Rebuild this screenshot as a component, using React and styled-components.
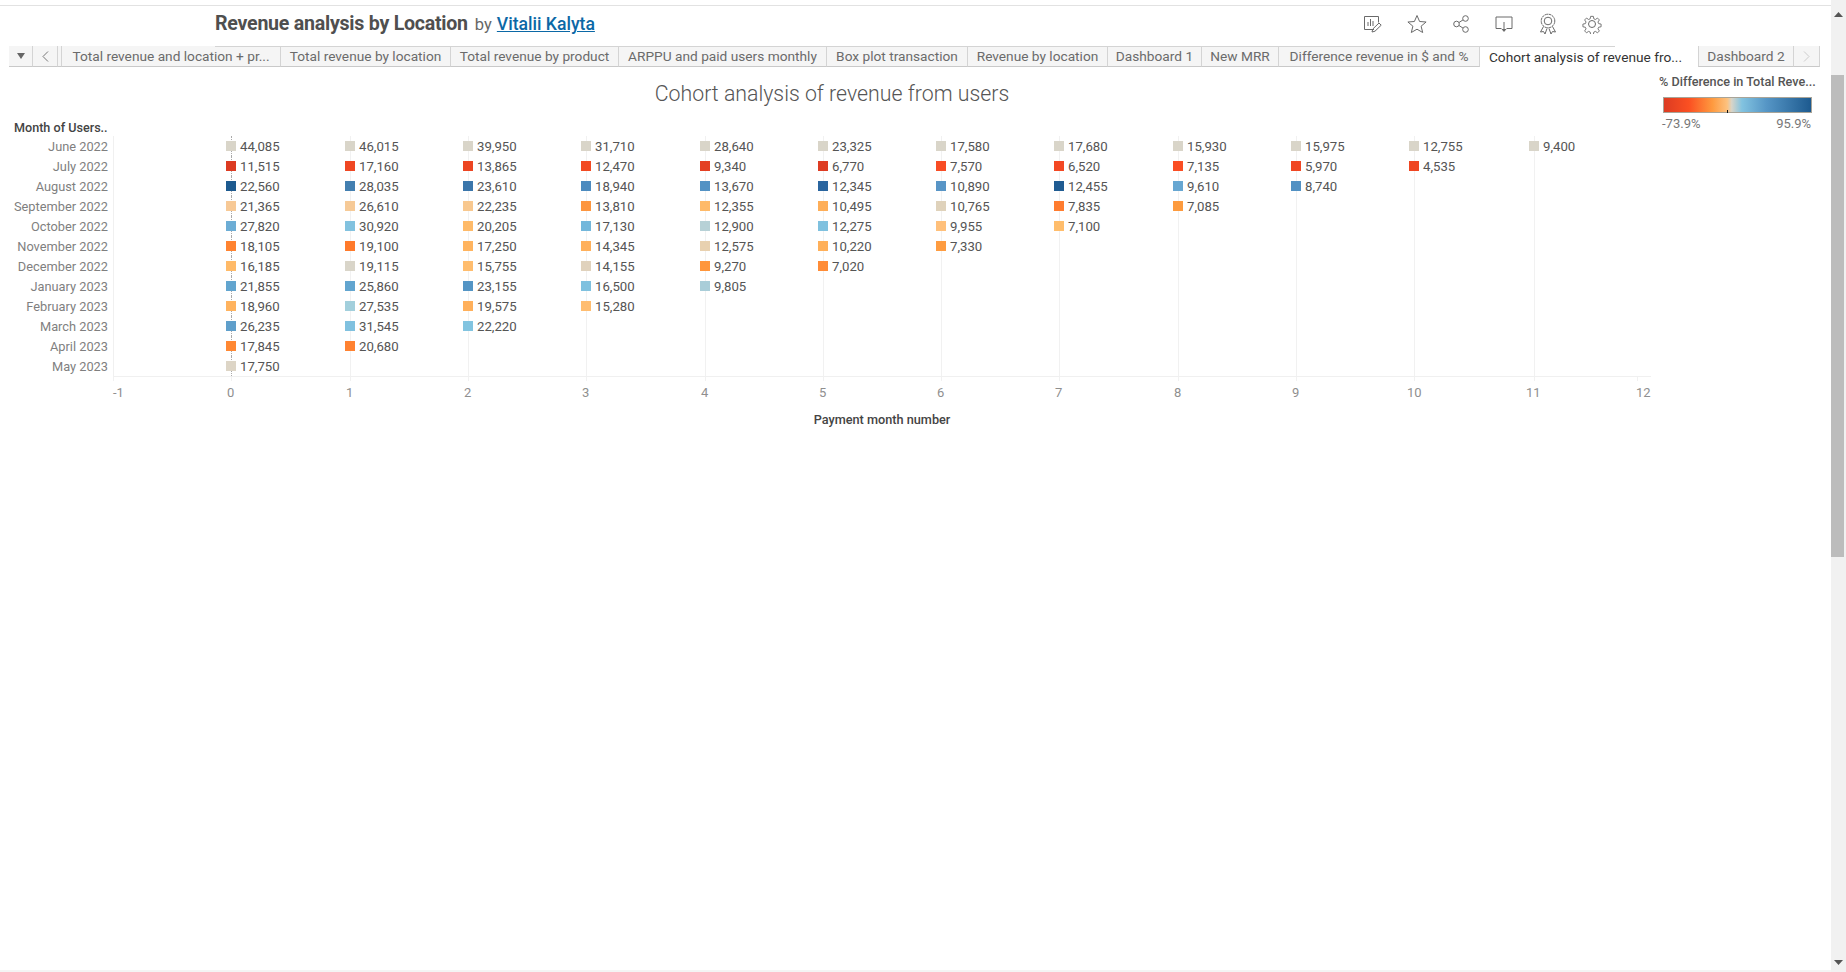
import React from "react";
import styled, { createGlobalStyle } from "styled-components";

const Global = createGlobalStyle`
  html, body { margin: 0; padding: 0; background: #fff; overflow: hidden; }
  body { font-family: Roboto, "Liberation Sans", sans-serif; }
`;

const Page = styled.div`
  display: flex;
  width: 1846px;
  height: 972px;
  overflow: hidden;
  background: #fff;
`;
const Main = styled.main`
  width: 1831px;
  height: 972px;
  display: flex;
  flex-direction: column;
  padding-top: 5px;
  box-sizing: border-box;
  border-bottom: 2px solid #f4f4f4;
`;
const TitleBar = styled.header`
  height: 41px;
  box-sizing: border-box;
  border-top: 1px solid #e2e2e2;
  display: flex;
  align-items: center;
  padding-left: 215px;
  flex: none;
`;
const TitleGroup = styled.div`
  width: 1147px;
  flex: none;
  display: flex;
  align-items: baseline;
  margin-top: -5px;
`;
const WorkbookTitle = styled.h1`
  margin: 0;
  font-size: 19.6px;
  font-weight: 700;
  color: #4f4f4f;
  letter-spacing: -0.25px;
  white-space: nowrap;
`;
const Byline = styled.span`
  margin-left: 7px;
  font-size: 16.5px;
  color: #666;
`;
const Author = styled.a`
  margin-left: 5px;
  font-size: 17.6px;
  font-weight: 500;
  color: #0b68a6;
  text-decoration: underline;
`;
const Toolbar = styled.div`
  display: flex;
  align-items: center;
  gap: 24px;
  margin-top: -4px;
  color: #6a6a6a;
  svg { display: block; flex: none; }
`;

const TabStrip = styled.nav`
  position: relative;
  height: 21px;
  margin-left: 9px;
  display: flex;
  flex: none;
  &::before {
    content: "";
    position: absolute;
    left: 206px;
    width: 1400px;
    top: 0;
    height: 1px;
    background: #d4d4d4;
  }
`;
const Tab = styled.div`
  width: ${(p) => p.$w}px;
  box-sizing: border-box;
  height: 21px;
  display: flex;
  align-items: center;
  justify-content: center;
  padding-right: ${(p) => (p.$active ? "7px" : "0")};
  white-space: nowrap;
  font-size: 13.7px;
  line-height: 20px;
  color: ${(p) => (p.$active ? "#333" : "#6b6b6b")};
  background: ${(p) => (p.$active ? "#fff" : "#f5f5f5")};
  border-right: ${(p) => (p.$active ? "0" : "1px solid #d4d4d4")};
  border-bottom: ${(p) => (p.$active ? "0" : "1px solid #c9c9c9")};
  border-left: ${(p) => (p.$edge ? "1px solid #d4d4d4" : "0")};
`;
const TabIcon = styled(Tab)`
  color: #777;
`;

const ChartHead = styled.section`
  height: 69px;
  flex: none;
  display: flex;
`;
const HeadLeft = styled.div`
  width: 1650px;
  display: flex;
  flex-direction: column;
  flex: none;
`;
const ChartTitle = styled.h2`
  margin: 14px 0 0 14px;
  height: 26px;
  line-height: 26px;
  font-size: 21.3px;
  font-weight: 300;
  color: #555;
  text-align: center;
  white-space: nowrap;
`;
const RowHeader = styled.div`
  margin: 13px 0 0 14px;
  font-size: 12.6px;
  line-height: 16px;
  font-weight: 500;
  color: #444;
`;
const Legend = styled.aside`
  margin-left: 9px;
  width: 165px;
  padding-top: 7px;
`;
const LegendTitle = styled.div`
  font-size: 12.65px;
  line-height: 16px;
  font-weight: 500;
  color: #555;
  white-space: nowrap;
`;
const LegendBar = styled.div`
  position: relative;
  margin: 7px 0 0 4px;
  width: 149px;
  height: 16px;
  box-sizing: border-box;
  border: 1px solid #a8a498;
  background: linear-gradient(
    90deg,
    #dc3b22 0%,
    #fb5022 17%,
    #fe9a3f 33%,
    #fdc27f 43%,
    #d8d4c8 46%,
    #82c3e0 53%,
    #5595c5 70%,
    #1d5a8f 100%
  );
  &::after {
    content: "";
    position: absolute;
    left: 63px;
    bottom: -1px;
    width: 1px;
    height: 3px;
    background: #111;
  }
`;
const LegendScale = styled.div`
  display: flex;
  justify-content: space-between;
  width: 149px;
  margin: 3px 0 0 3px;
  font-size: 13px;
  line-height: 15px;
  color: #777;
`;

const ChartBody = styled.section`
  display: flex;
  flex: none;
`;
const RowLabels = styled.div`
  width: 108px;
  flex: none;
  display: flex;
  flex-direction: column;
`;
const RowLabel = styled.div`
  height: 20px;
  line-height: 21px;
  font-size: 12.8px;
  color: #7f7f7f;
  text-align: right;
  white-space: nowrap;
`;
const Plot = styled.div`
  margin-left: 5px;
  width: 1538px;
  flex: none;
  border-left: 1px solid #f0f0f0;
  border-bottom: 1px solid #f0f0f0;
  box-sizing: border-box;
  padding-left: 112px;
  display: grid;
  grid-template-columns: 119px 118px 118px 119px 118px 118px 118px 119px 118px 118px 120px 1fr;
  grid-auto-rows: 20px;
  height: 241px;
`;
const Cell = styled.div`
  position: relative;
  display: flex;
  align-items: center;
  gap: 4px;
  font-size: 13.2px;
  color: #555;
  &::before {
    content: "";
    position: absolute;
    left: 5px;
    top: 0;
    bottom: 0;
    border-left: 1px ${(p) => (p.$zero ? "dotted #aaa" : "solid #f1f1f1")};
  }
`;
const Mark = styled.span`
  position: relative;
  width: 10px;
  height: 10px;
  flex: none;
  background: ${(p) => p.$c};
`;
const Value = styled.span`
  position: relative;
  line-height: 21px;
`;

const Axis = styled.div`
  margin-left: 113px;
  width: 1547px;
  display: grid;
  grid-template-columns: 113px 119px 118px 118px 119px 118px 118px 118px 119px 118px 118px 120px 108px 1fr;
  flex: none;
`;
const AxisTick = styled.div`
  position: relative;
  font-size: 13px;
  line-height: 31px;
  color: #8f8f8f;
  white-space: nowrap;
  &::before {
    content: "";
    position: absolute;
    top: 0;
    left: ${(p) => (p.$plain ? 0 : 5)}px;
    height: 4px;
    border-left: 1px solid #f1f1f1;
  }
`;
const TickText = styled.span`
  display: inline-block;
  transform: translateX(${(p) => p.$dx}px);
`;
const AxisTitle = styled.div`
  margin: 4px 0 0 13px;
  width: 1738px;
  text-align: center;
  font-size: 12.7px;
  line-height: 16px;
  font-weight: 500;
  color: #444;
`;

const ScrollBar = styled.div`
  width: 15px;
  height: 972px;
  background: #f1f1f1;
  display: flex;
  flex-direction: column;
  align-items: flex-start;
  flex: none;
`;
const ScrollTop = styled.div`
  height: 75px;
  width: 15px;
  display: flex;
  justify-content: center;
  padding-top: 12px;
  box-sizing: border-box;
`;
const Thumb = styled.div`
  width: 13px;
  height: 482px;
  background: #bcbcbc;
  flex: none;
`;
const ScrollBottom = styled.div`
  flex: 1;
  width: 15px;
  display: flex;
  align-items: flex-end;
  justify-content: center;
  padding-bottom: 7px;
  box-sizing: border-box;
`;

const N = "#d9d5c9";
const rows = [
  ["June 2022", [["44,085",N],["46,015",N],["39,950",N],["31,710",N],["28,640",N],["23,325",N],["17,580",N],["17,680",N],["15,930",N],["15,975",N],["12,755",N],["9,400",N]]],
  ["July 2022", [["11,515","#dc3b22"],["17,160","#ef4723"],["13,865","#ec4522"],["12,470","#f24a22"],["9,340","#e44023"],["6,770","#de3c23"],["7,570","#f84d25"],["6,520","#f34823"],["7,135","#fa4e24"],["5,970","#f04723"],["4,535","#ef4622"]]],
  ["August 2022", [["22,560","#1d5a8f"],["28,035","#437fb0"],["23,610","#3b76ab"],["18,940","#4c8bbf"],["13,670","#5392c4"],["12,345","#2a659f"],["10,890","#5895c6"],["12,455","#205c92"],["9,610","#67a7d2"],["8,740","#5291c3"]]],
  ["September 2022", [["21,365","#f7c996"],["26,610","#f6ca97"],["22,235","#f8c88f"],["13,810","#fd963f"],["12,355","#feba69"],["10,495","#feae58"],["10,765","#dfd2bb"],["7,835","#ff7c2f"],["7,085","#fd9b3e"]]],
  ["October 2022", [["27,820","#6cadd5"],["30,920","#82c2df"],["20,205","#feba69"],["17,130","#73b7db"],["12,900","#b7d1d6"],["12,275","#7fc1df"],["9,955","#ffc07b"],["7,100","#ffbd6c"]]],
  ["November 2022", [["18,105","#ff8330"],["19,100","#ff7a2b"],["17,250","#ffb45f"],["14,345","#ffb05b"],["12,575","#e8d1b0"],["10,220","#ffb05a"],["7,330","#fe9c41"]]],
  ["December 2022", [["16,185","#ffba68"],["19,115",N],["15,755","#ffbd6e"],["14,155","#e0d2bd"],["9,270","#ff963b"],["7,020","#ff8c37"]]],
  ["January 2023", [["21,855","#62a5cf"],["25,860","#62a5cf"],["23,155","#5495c5"],["16,500","#7fc1df"],["9,805","#a9cdd8"]]],
  ["February 2023", [["18,960","#ffb35e"],["27,535","#a2cfdc"],["19,575","#ffb05b"],["15,280","#ffbd70"]]],
  ["March 2023", [["26,235","#5f9fcb"],["31,545","#80c1df"],["22,220","#82c4e0"]]],
  ["April 2023", [["17,845","#ff8833"],["20,680","#ff8231"]]],
  ["May 2023", [["17,750","#ddd5c6"]]],
];

const tabs = [
  ["Total revenue and location + pr...", 219],
  ["Total revenue by location", 170],
  ["Total revenue by product", 168],
  ["ARPPU and paid users monthly", 208],
  ["Box plot transaction", 141],
  ["Revenue by location", 140],
  ["Dashboard 1", 94],
  ["New MRR", 77],
  ["Difference revenue in $ and %", 201],
];

const ticks = [["-1",0],["0",1],["1",1],["2",1],["3",1],["4",1],["5",1],["6",1],["7",1],["8",1],["9",1],["10",-2],["11",-3],["12",-1]];

const Ico = ({ children, w = 20, h = 20 }) => (
  <svg width={w} height={h} viewBox={`0 0 ${w} ${h}`} fill="none" stroke="currentColor" strokeWidth="1">
    {children}
  </svg>
);

const App = () => (
  <Page>
    <Global />
    <Main>
      <TitleBar>
        <TitleGroup>
          <WorkbookTitle>Revenue analysis by Location</WorkbookTitle>
          <Byline>by</Byline>
          <Author href="#">Vitalii Kalyta</Author>
        </TitleGroup>
        <Toolbar>
          <Ico>
            <path d="M12 15.500H2.500V2.500h14v6" />
            <path d="M6 12V8M8.500 12V5M11 12V7" />
            <path d="M10 18l.8-3 6.200-6 2.200 2.200-6.200 6z" />
          </Ico>
          <Ico w={22}>
            <path d="M11 1.500l2.600 6 6.500.5-5 4.200 1.600 6.300L11 15.200l-5.700 3.300 1.600-6.300-5-4.200 6.500-.5z" />
          </Ico>
          <Ico w={18}>
            <circle cx="4.500" cy="10" r="2.800" />
            <circle cx="13.500" cy="4.500" r="2.800" />
            <circle cx="13.500" cy="15.500" r="2.800" />
            <path d="M7 8.500l4-2.600M7 11.500l4 2.600" />
          </Ico>
          <Ico>
            <path d="M7.500 14.500H2V3h16v11.500h-5.500" />
            <path d="M10 8v7" />
            <path d="M7.500 15h5L10 18z" fill="currentColor" stroke="none" />
          </Ico>
          <Ico w={20} h={22}>
            <g transform="translate(1 0)">
              <circle cx="9" cy="8" r="6.800" strokeDasharray="3 .6" />
              <circle cx="9" cy="8" r="3.800" />
              <path d="M4.500 13.500L1.500 19l3-.5 1.500 2.500 2-5.500M13.500 13.500l3 5.500-3-.5-1.500 2.500-2-5.500" />
            </g>
          </Ico>
          <Ico>
            <circle cx="10" cy="10" r="3.500" />
            <path d="M8.500 1.500h3l.5 2.700 1.800.8 2.300-1.600 2.100 2.100-1.600 2.300.8 1.800 2.700.5v3l-2.700.5-.8 1.800 1.600 2.300-2.100 2.100-2.300-1.600-1.800.8-.5 2.700h-3l-.5-2.700-1.800-.8-2.300 1.600-2.100-2.100 1.600-2.300-.8-1.800-2.700-.5v-3l2.700-.5.800-1.800-1.600-2.300 2.100-2.100 2.300 1.600 1.800-.8z" transform="translate(1 1) scale(.9)" />
          </Ico>
        </Toolbar>
      </TitleBar>

      <TabStrip>
        <TabIcon $w={24}>
          <svg width="8" height="6" viewBox="0 0 8 6"><path d="M0 0h8L4 6z" fill="#666" /></svg>
        </TabIcon>
        <TabIcon $w={25}>
          <svg width="7" height="11" viewBox="0 0 7 11" fill="none" stroke="#777"><path d="M6 .5L1 5.500l5 5" /></svg>
        </TabIcon>
        <Tab $w={4} />
        {tabs.map(([t, w]) => (
          <Tab key={t} $w={w}>{t}</Tab>
        ))}
        <Tab $w={218} $active>Cohort analysis of revenue fro...</Tab>
        <Tab $w={96} $edge>Dashboard 2</Tab>
        <TabIcon $w={26}>
          <svg width="7" height="11" viewBox="0 0 7 11" fill="none" stroke="#ccc"><path d="M1 .5l5 5-5 5" /></svg>
        </TabIcon>
      </TabStrip>

      <ChartHead>
        <HeadLeft>
          <ChartTitle>Cohort analysis of revenue from users</ChartTitle>
          <RowHeader>Month of Users..</RowHeader>
        </HeadLeft>
        <Legend>
          <LegendTitle>% Difference in Total Reve...</LegendTitle>
          <LegendBar />
          <LegendScale>
            <span>-73.9%</span>
            <span>95.9%</span>
          </LegendScale>
        </Legend>
      </ChartHead>

      <ChartBody>
        <RowLabels>
          {rows.map(([m]) => (
            <RowLabel key={m}>{m}</RowLabel>
          ))}
        </RowLabels>
        <Plot>
          {rows.flatMap(([m, vals]) =>
            Array.from({ length: 12 }, (_, i) => (
              <Cell key={m + i} $zero={i === 0}>
                {vals[i] && <Mark $c={vals[i][1]} />}
                {vals[i] && <Value>{vals[i][0]}</Value>}
              </Cell>
            ))
          )}
        </Plot>
      </ChartBody>
      <Axis>
        {ticks.map(([t, dx], i) => (
          <AxisTick key={t} $plain={i === 0 || i === 13}>
            <TickText $dx={dx}>{t}</TickText>
          </AxisTick>
        ))}
      </Axis>
      <AxisTitle>Payment month number</AxisTitle>
    </Main>
    <ScrollBar>
      <ScrollTop>
        <svg width="9" height="5" viewBox="0 0 9 5"><path d="M0 5h9L4.500 0z" fill="#555" /></svg>
      </ScrollTop>
      <Thumb />
      <ScrollBottom>
        <svg width="9" height="5" viewBox="0 0 9 5"><path d="M0 0h9L4.500 5z" fill="#555" /></svg>
      </ScrollBottom>
    </ScrollBar>
  </Page>
);

export default App;
